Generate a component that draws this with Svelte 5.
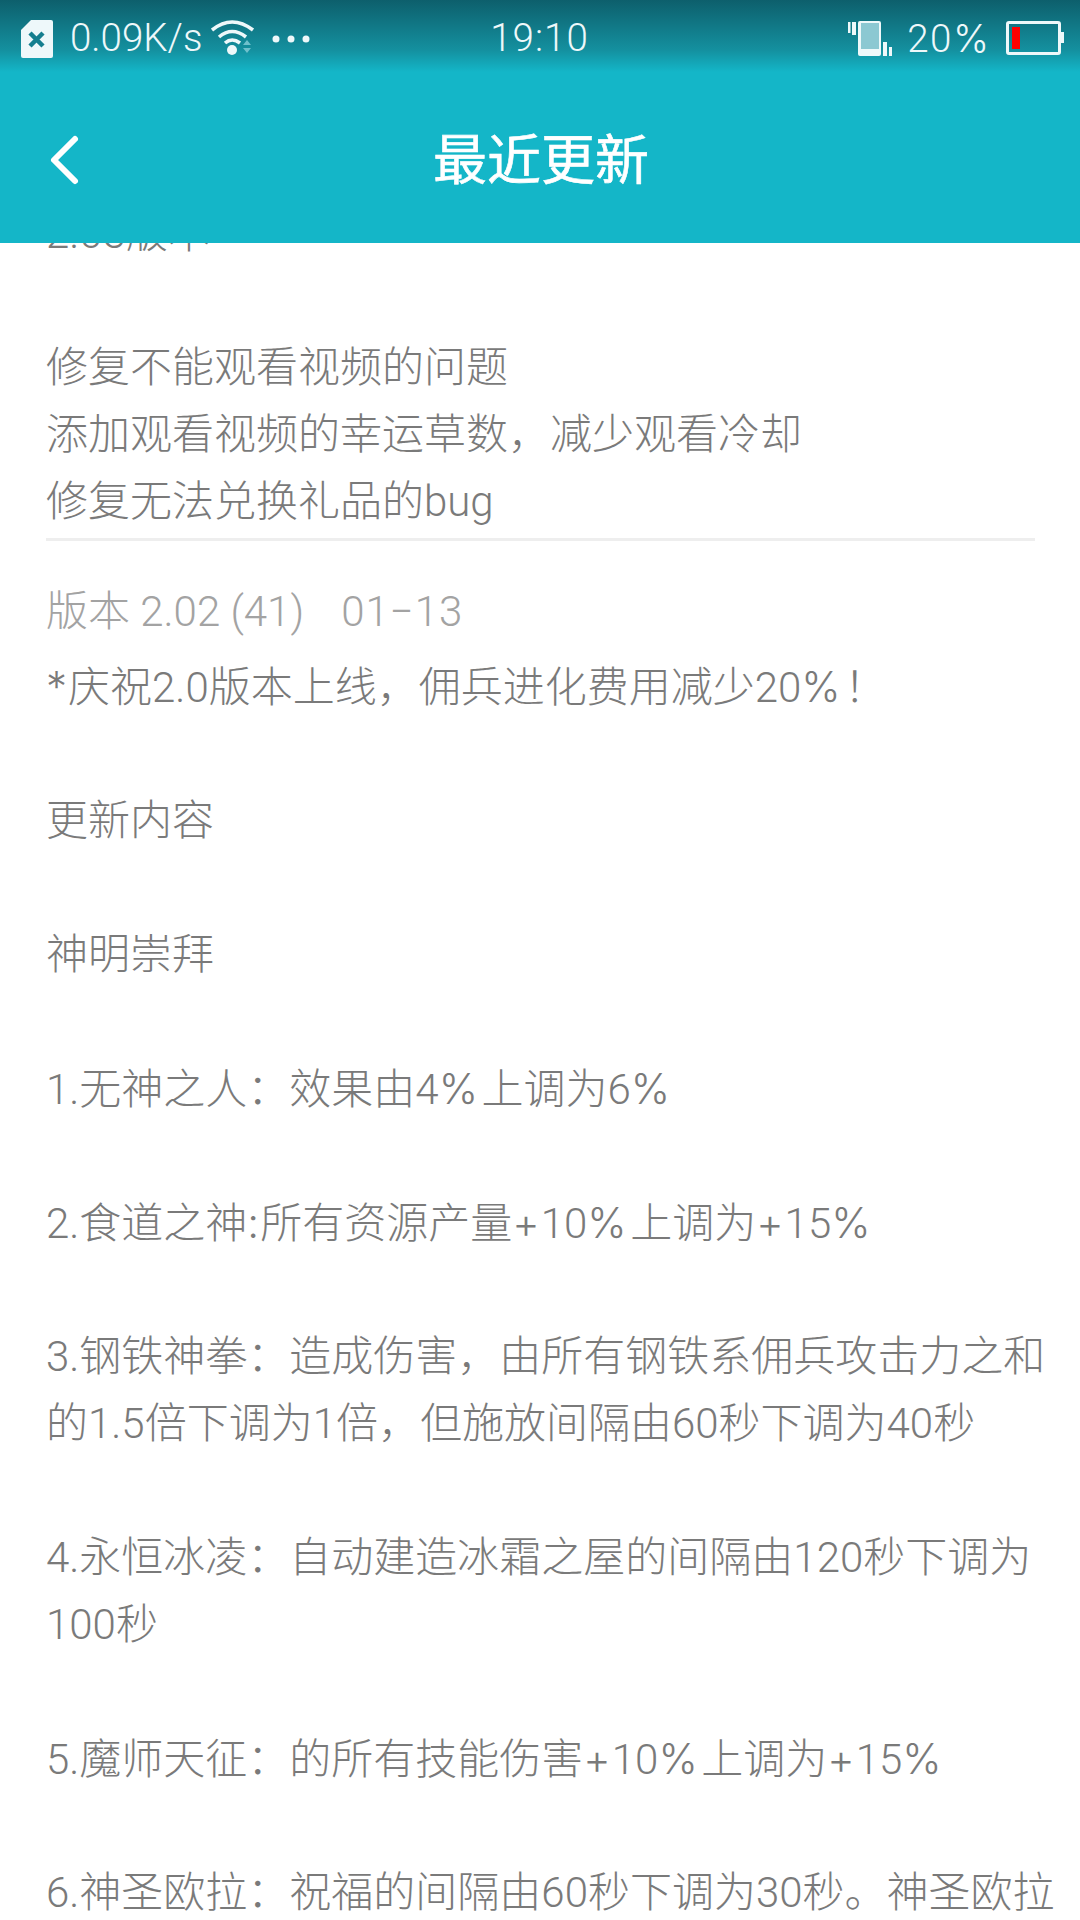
<script>
	const topLines = ['2.03版本', '', '修复不能观看视频的问题', '添加观看视频的幸运草数，减少观看冷却', '修复无法兑换礼品的bug'];
	const lines = [
		'*庆祝2.0版本上线，佣兵进化费用减少20%！',
		'',
		'更新内容',
		'',
		'神明崇拜',
		'',
		'1.无神之人：效果由4%上调为6%',
		'',
		'2.食道之神:所有资源产量+10%上调为+15%',
		'',
		'3.钢铁神拳：造成伤害，由所有钢铁系佣兵攻击力之和',
		'的1.5倍下调为1倍，但施放间隔由60秒下调为40秒',
		'',
		'4.永恒冰凌：自动建造冰霜之屋的间隔由120秒下调为',
		'100秒',
		'',
		'5.魔师天征：的所有技能伤害+10%上调为+15%',
		'',
		'6.神圣欧拉：祝福的间隔由60秒下调为30秒。神圣欧拉'
	];

	// roboto's symbols are too narrow, they get their own span
	const split = (line) => line.split(/([%*+:])/).filter(Boolean);
	const isSymbol = (part) => ['%', '*', '+', ':'].includes(part);
</script>

<div class="screen">
	<header>
		<div class="status">
			<div class="left">
				<svg class="sim" width="32" height="38" viewBox="0 0 32 38">
					<path d="M10 0H30a2 2 0 0 1 2 2V36a2 2 0 0 1-2 2H2a2 2 0 0 1-2-2V10z" fill="#eef8fa" />
					<path d="M9 13l13 13M22 13L9 26" stroke="#157f8f" stroke-width="4.5" />
				</svg>
				<span class="stat">0.09K/s</span>
				<svg class="wifi" width="44" height="36" viewBox="0 0 44 36">
					<path d="M1 10Q21 -6 42 10M8 17Q21 6 35 17M14 23Q21 17 29 23" fill="none" stroke="#eef8fa" stroke-width="3.6" />
					<circle cx="21" cy="30" r="5" fill="#eef8fa" />
					<path d="M32 25l4-5 4 5zM32 28l4 5 4-5z" fill="#6fc0cc" />
				</svg>
				<svg class="dots" width="38" height="8" viewBox="0 0 38 8">
					<circle cx="4" cy="4" r="3.5" fill="#eef8fa" />
					<circle cx="19" cy="4" r="3.5" fill="#eef8fa" />
					<circle cx="34" cy="4" r="3.5" fill="#eef8fa" />
				</svg>
			</div>
			<div class="time">19:10</div>
			<div class="right">
				<svg class="vibrate" width="44" height="36" viewBox="0 0 44 36">
					<path d="M0 2h2.5v11H0zM4 2h4v13H4z" fill="#eef8fa" />
					<rect x="10" y="1" width="23" height="35" rx="2" fill="#eef8fa" />
					<rect x="13" y="3" width="18" height="26" fill="#8cc8d2" />
					<path d="M35 22h4v14h-4zM41 27h3v9h-3z" fill="#eef8fa" />
				</svg>
				<span class="stat battery-text">20<span class="wide">%</span></span>
				<div class="battery">
					<div class="cell"><div class="level"></div></div>
					<div class="nub"></div>
				</div>
			</div>
		</div>
		<div class="titlebar">
			<svg class="back" width="32" height="56" viewBox="0 0 32 56">
				<path d="M26 7L5 28l21 21" fill="none" stroke="#fff" stroke-width="6" stroke-linecap="round" stroke-linejoin="round" />
			</svg>
			<h1>最近更新</h1>
		</div>
	</header>
	<main>
		<div class="scroller">
			<section class="first">
				{#each topLines as line}
					<p>{line}</p>
				{/each}
			</section>
			<h2>版本 2.02 (41)<span class="date">01−13</span></h2>
			{#each lines as line}
				<p>
					{#each split(line) as part}
						{#if isSymbol(part)}<span class="wide" class:pct={part === '%'}>{part}</span>{:else}{part}{/if}
					{/each}
				</p>
			{/each}
		</div>
	</main>
</div>

<style>
	:global(body) {
		margin: 0;
		background: #fff;
	}

	.screen {
		width: 1080px;
		height: 1920px;
		display: flex;
		flex-direction: column;
		overflow: hidden;
		font-family: Roboto, 'Noto Sans CJK SC', sans-serif;
	}

	header {
		height: 243px;
		flex: none;
		background: linear-gradient(#0d5f6c 0, #14909f 50px, #14b6c8 72px);
		background-color: #14b6c8;
		color: #fff;
	}

	.status {
		height: 72px;
		box-sizing: border-box;
		display: grid;
		grid-template-columns: 1fr auto 1fr;
		align-items: center;
		padding: 3px 16px 0 21px;
		color: #eef8fa;
	}

	.left,
	.right {
		display: flex;
		align-items: center;
	}

	.right {
		justify-content: flex-end;
	}

	.stat,
	.time {
		font-size: 38.5px;
		font-weight: 300;
	}

	.time {
		letter-spacing: 1px;
		margin-left: -6px;
	}

	.battery-text {
		letter-spacing: 1.5px;
	}

	.wide {
		font-family: Inter, sans-serif;
		font-weight: 300;
		letter-spacing: 1px;
	}

	.pct {
		letter-spacing: 3.5px;
	}

	.sim {
		margin: 2px 17px 0 0;
	}

	.wifi {
		margin-left: 9px;
	}

	.dots {
		margin: 2px 0 0 17px;
	}

	.vibrate {
		margin-right: 15px;
	}

	.battery {
		display: flex;
		align-items: center;
		margin-left: 16px;
	}

	.cell {
		width: 55px;
		height: 34px;
		box-sizing: border-box;
		border: 3px solid #eef8fa;
		border-radius: 3px;
		padding: 3px;
	}

	.level {
		width: 8px;
		height: 100%;
		background: #f00;
	}

	.nub {
		width: 3px;
		height: 11px;
		background: #eef8fa;
	}

	.titlebar {
		height: 171px;
		display: flex;
		align-items: center;
		justify-content: center;
		position: relative;
	}

	.back {
		position: absolute;
		left: 49px;
		top: 60px;
	}

	h1 {
		margin: 0 0 2px 2px;
		font-size: 54px;
		font-weight: 400;
		-webkit-text-stroke: 0.6px #fff;
	}

	main {
		flex: 1;
		overflow: hidden;
	}

	.scroller {
		margin-top: -43px;
		padding: 0 35px 0 46px;
	}

	.first {
		border-bottom: 3px solid #eeeeee;
		padding-bottom: 3px;
		margin-right: 10px;
	}

	p {
		margin: 0;
		height: 67px;
		line-height: 67px;
		font-size: 42px;
		font-weight: 300;
		color: #7a7a7a;
		white-space: nowrap;
	}

	h2 {
		margin: 0;
		padding-top: 30px;
		line-height: 82px;
		font-size: 42px;
		font-weight: 300;
		color: #a3a3a3;
	}

	.date {
		margin-left: 37px;
		letter-spacing: 1px;
	}
</style>
